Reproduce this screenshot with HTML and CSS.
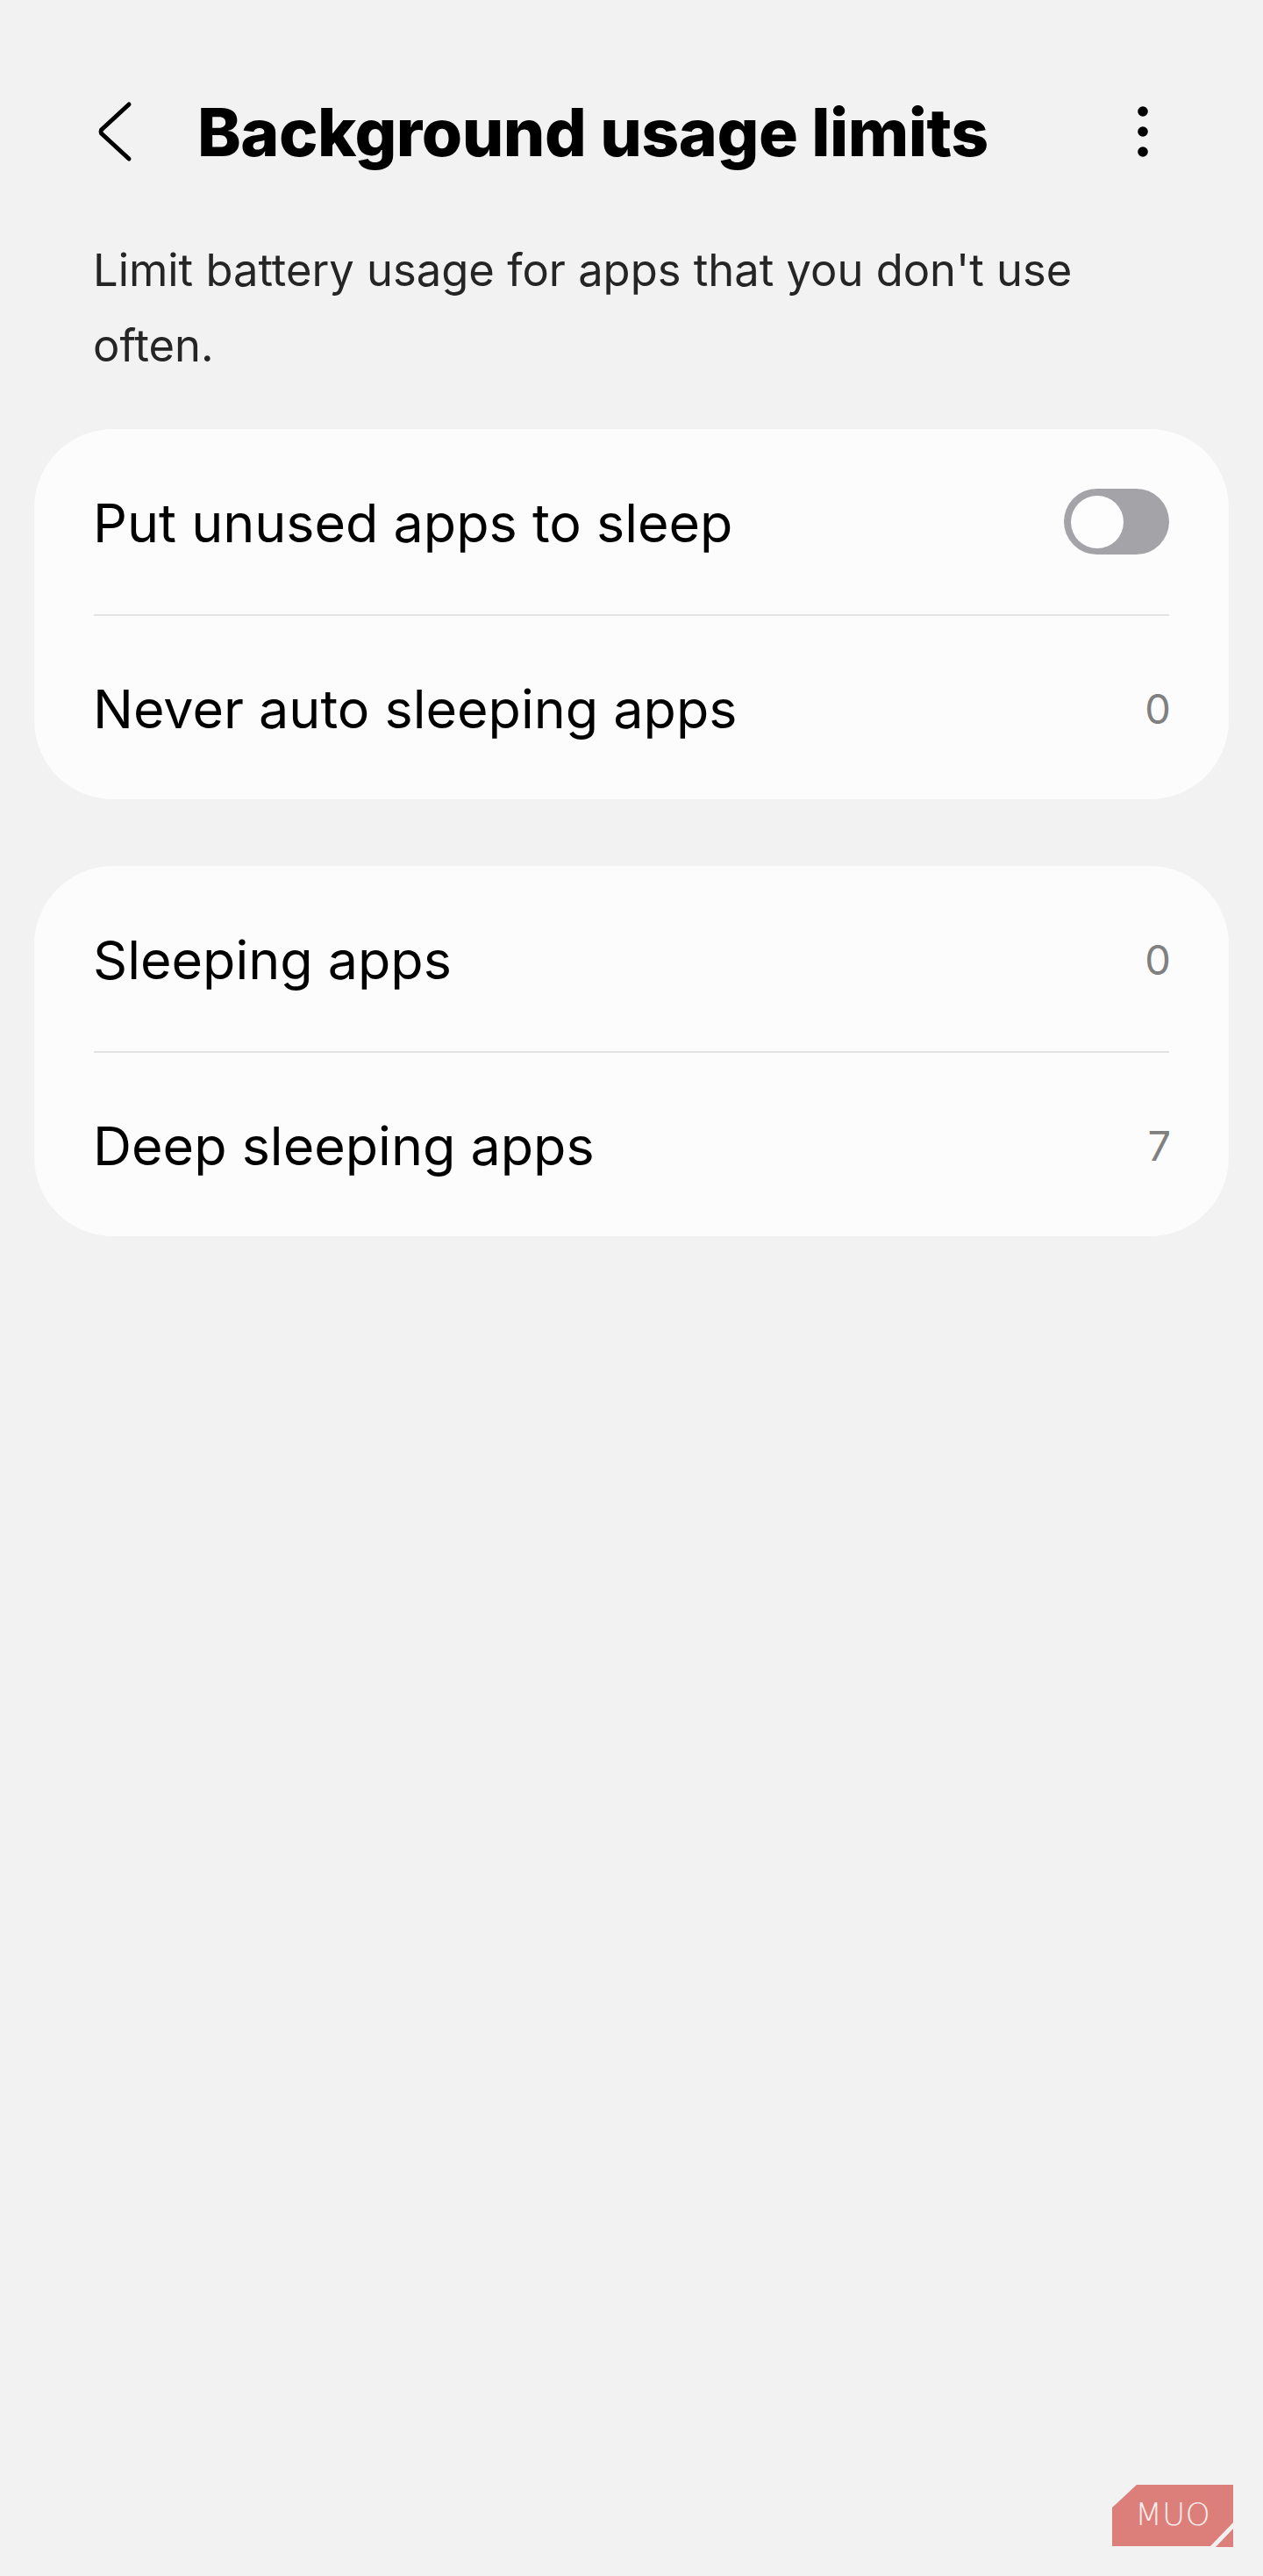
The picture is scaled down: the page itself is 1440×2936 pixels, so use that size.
FILE: index.html
```html
<!DOCTYPE html>
<html lang="en">
<head>
	<meta charset="UTF-8">
	<meta name="viewport" content="width=device-width, initial-scale=1.0">
	<title>Background usage limits</title>
	<link rel="stylesheet" href="styles.css">
</head>
<body>
	<div class="page">
		<header class="header">
			<svg class="back" width="48" height="72" viewBox="0 0 48 72">
				<path d="M40 5 L8.500 34 Q7.500 36 8.500 38 L40 67" fill="none" stroke="#000" stroke-width="5" stroke-linecap="round" stroke-linejoin="round"/>
			</svg>
			<h1 class="title">Background usage limits</h1>
			<svg class="more" width="12" height="58" viewBox="0 0 12 58">
				<circle cx="6" cy="6" r="5.800"/>
				<circle cx="6" cy="29" r="5.800"/>
				<circle cx="6" cy="52" r="5.800"/>
			</svg>
		</header>

		<p class="intro">Limit battery usage for apps that you don't use often.</p>

		<div class="card">
			<div class="row">
				<span class="label">Put unused apps to sleep</span>
				<span class="switch"><span class="knob"></span></span>
			</div>
			<div class="row">
				<span class="label">Never auto sleeping apps</span>
				<span class="count">0</span>
			</div>
		</div>

		<div class="card">
			<div class="row">
				<span class="label">Sleeping apps</span>
				<span class="count">0</span>
			</div>
			<div class="row">
				<span class="label">Deep sleeping apps</span>
				<span class="count">7</span>
			</div>
		</div>

		<div class="logo">
			<svg width="140" height="72" viewBox="0 0 140 72">
				<path d="M28 0 H138 V43 L112 70 H0 V26 Z" fill="#dc7f7a"/>
				<path d="M138 50 V71 H118 Z" fill="#dc7f7a"/>
			</svg>
			<span class="logo-text">MUO</span>
		</div>
	</div>
</body>
</html>
```

FILE: styles.css
```css
* { box-sizing: border-box; padding: 0; margin: 0; }

html, body {
	background: #f2f2f2;
}

body {
	font-family: Inter, "Open Sans", sans-serif;
	color: #000;
}

.page {
	position: relative;
	width: 1440px;
	height: 2936px;
	padding: 112px 39px 0;
}

.header {
	display: flex;
	align-items: center;
	height: 76px;
	padding: 0 92px 0 68px;
}

.back { flex: none; }

.title {
	flex: 1;
	margin-left: 70px;
	padding-top: 2px;
	font-size: 75px;
	font-weight: 800;
	line-height: 76px;
	letter-spacing: -0.500px;
	white-space: nowrap;
}

.more { flex: none; fill: #000; }

.intro {
	margin-top: 77px;
	padding: 0 68px 0 67px;
	font-size: 50.700px;
	line-height: 86px;
	color: #252525;
}

.card {
	margin-top: 52px;
	background: #fcfcfd;
	border-radius: 90px;
	padding: 0 68px;
}

.card + .card {
	margin-top: 76px;
}

.row {
	display: flex;
	align-items: center;
	justify-content: space-between;
	height: 211px;
}

.row + .row {
	border-top: 2px solid #e3e3e4;
}

.label {
	padding-top: 2px;
	margin-left: -1px;
	font-size: 61px;
}

.count {
	padding-top: 2px;
	margin-right: -2px;
	font-size: 47px;
	color: #808080;
}

.switch {
	display: flex;
	align-items: center;
	width: 120px;
	height: 75px;
	padding-left: 8px;
	border-radius: 38px;
	background: #a3a3a8;
}

.knob {
	width: 60px;
	height: 60px;
	border-radius: 50%;
	background: #fdfdfd;
}

.logo {
	position: absolute;
	left: 1268px;
	top: 2832px;
	width: 140px;
	height: 72px;
}

.logo svg { display: block; }

.logo-text {
	position: absolute;
	left: 26px;
	top: 14px;
	font-family: "DejaVu Sans", sans-serif;
	font-size: 36px;
	font-weight: 200;
	line-height: 40px;
	color: #fdeeee;
}
```
